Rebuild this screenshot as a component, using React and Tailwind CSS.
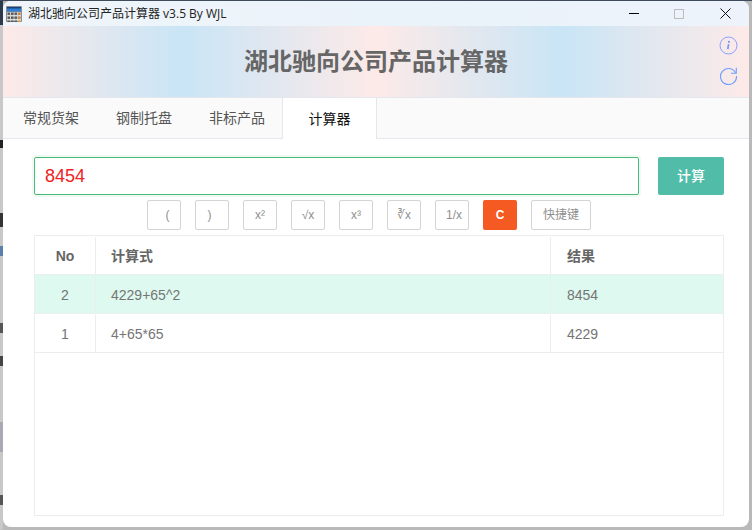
const CJK = '"Liberation Sans","Noto Sans CJK SC",sans-serif';

function CalcIcon() {
  return (
    <svg width="16" height="16" viewBox="0 0 16 16" className="shrink-0">
      <rect x="0" y="0" width="16" height="16" rx="1" fill="#8b8f92" />
      <rect x="1" y="1" width="14" height="4.5" fill="#2f7fd6" />
      <rect x="1" y="1" width="14" height="1.5" fill="#14427e" />
      <rect x="1" y="6" width="14" height="9" fill="#d9d9d6" />
      {[1.5, 5.5, 9.5].map((y0, r) =>
        [1.5, 5, 8.5, 12].map((x0, c) => (
          <rect key={`${r}-${c}`} x={x0} y={y0 + 5} width="2.6" height="2.4" fill={c === 3 && r === 2 ? "#e8962e" : c === 3 ? "#c77f3a" : "#55585c"} />
        ))
      )}
    </svg>
  );
}

function SmallButton({ children, wide, danger, extra = "" }) {
  return (
    <button
      className={`h-[30px] rounded-[2px] text-xs flex items-center justify-center ${wide ? "w-[60px]" : "w-[34px]"} ${danger ? "bg-[#f45a22] text-white font-bold" : "bg-white border border-[#d4d4d4] text-[#8f8f8f]"} ${extra}`}
    >
      {children}
    </button>
  );
}

function Row({ no, expr, result, highlight }) {
  return (
    <div className={`flex h-[39px] border-b border-[#ebeef0] text-sm text-[#757575] pt-[1px] ${highlight ? "bg-[#def9ef]" : "bg-white"}`}>
      <div className="w-[61px] shrink-0 border-r border-[#ebeef0] flex items-center justify-center">{no}</div>
      <div className="w-[455px] shrink-0 border-r border-[#ebeef0] flex items-center pl-[15px]">{expr}</div>
      <div className="flex-1 flex items-center pl-[16px]">{result}</div>
    </div>
  );
}

export default function App() {
  const tabs = ["常规货架", "钢制托盘", "非标产品"];
  return (
    <div
      className="relative w-[752px] h-[530px] overflow-hidden bg-[#b9b9b9] pl-[3px] pr-[3px] pt-[1px] pb-[3px]"
      style={{ fontFamily: CJK }}
    >
      <div className="absolute left-0 top-0 w-full h-[1px] bg-[#3f4b5c]" />
      <div className="absolute left-0 top-[1px] w-[3px] h-[24px] bg-[#2c3a4e]" />
      <div className="absolute left-0 top-[25px] w-[3px] h-[505px] bg-[#c8c8c8]" />
      <div className="absolute left-0 top-[140px] w-[3px] h-[8px] bg-[#222222]" />
      <div className="absolute left-0 top-[213px] w-[3px] h-[14px] bg-[#333333]" />
      <div className="absolute left-0 top-[246px] w-[3px] h-[10px] bg-[#5a7fae]" />
      <div className="absolute left-0 top-[323px] w-[3px] h-[10px] bg-[#555555]" />
      <div className="absolute left-0 top-[356px] w-[3px] h-[10px] bg-[#444444]" />
      <div className="absolute left-0 top-[422px] w-[3px] h-[30px] bg-[#a9a9b3]" />
      <div className="absolute left-0 top-[495px] w-[3px] h-[10px] bg-[#555555]" />
      <div className="relative flex flex-col w-[746px] h-[526px] bg-white rounded-lg overflow-hidden">
        <div className="flex h-[25px] items-center bg-[linear-gradient(90deg,#eff5fa,#eaf3fa_60%,#eef3fb)] shrink-0">
          <div className="ml-[3px]"><CalcIcon /></div>
          <span className="ml-[6px] text-xs text-[#222222]" style={{ fontFamily: '"Open Sans","Noto Sans CJK SC",sans-serif' }}>湖北驰向公司产品计算器 v3.5 By WJL</span>
          <div className="ml-auto flex items-center pr-[18px]">
            <div className="w-[10px] h-[1px] bg-black mr-[35px]" />
            <div className="w-[10px] h-[10px] border border-[#bdbdbd] mr-[36px]" />
            <svg width="11" height="11" viewBox="0 0 11 11"><path d="M0.5 0.5L10.5 10.5M10.5 0.5L0.5 10.5" stroke="#111" strokeWidth="1" /></svg>
          </div>
        </div>
        <div className="relative flex h-[72px] items-center justify-center shrink-0 border-b border-[#e4e7ed] bg-[linear-gradient(90deg,#fdeae8_0%,#c9e5f6_24%,#fdeae8_50%,#c9e5f6_75%,#fdeae8_100%)]">
          <h1 className="text-2xl font-bold text-[#666666]">湖北驰向公司产品计算器</h1>
          <svg className="absolute right-[11px] top-[10px]" width="19" height="19" viewBox="0 0 19 19" fill="none">
            <circle cx="9.5" cy="9.5" r="8.5" stroke="#8a9cff" strokeWidth="1" />
            <circle cx="9.9" cy="5.8" r="1.1" fill="#7f93f5" />
            <path d="M9.6 8.2L8.8 13.2" stroke="#7f93f5" strokeWidth="1.7" />
          </svg>
          <svg className="absolute right-[11px] top-[40px]" width="19" height="19" viewBox="0 0 19 19" fill="none">
            <path d="M16.6 6.8A8 8 0 1 0 17.5 10" stroke="#6f9cff" strokeWidth="1.1" />
            <path d="M17.3 1.8V7.2H12" stroke="#6f9cff" strokeWidth="1.1" />
          </svg>
        </div>
        <div className="flex h-[41px] shrink-0 bg-[#fafafa] border-b border-[#e4e7ed]">
          <div className="flex pl-[20px] gap-[37px] items-center w-[279px]">
            {tabs.map((t) => (
              <span key={t} className="text-sm leading-none text-[#555555]">{t}</span>
            ))}
          </div>
          <div className="w-[95px] h-[41px] bg-white border-l border-r border-[#e4e7ed] flex items-center justify-center text-sm text-[#111111]">计算器</div>
        </div>
        <div className="flex flex-col flex-1 pl-[31px] pr-[25px] pt-[18px]">
          <div className="flex gap-[19px]">
            <div className="flex-1 h-[38px] border border-[#48bb78] rounded-[2px] shadow-[0_0_0_2px_#f1f9f4] flex items-center pl-[10px] text-lg text-[#ee2222]">8454</div>
            <button className="w-[66px] h-[38px] rounded-[2px] bg-[#51bca8] text-white text-sm font-medium">计算</button>
          </div>
          <div className="flex gap-[14px] mt-[5px] pl-[113px]">
            <SmallButton extra="pl-[7px]">(</SmallButton>
            <SmallButton extra="pr-[5px]">)</SmallButton>
            <SmallButton>x²</SmallButton>
            <SmallButton>√x</SmallButton>
            <SmallButton>x³</SmallButton>
            <SmallButton>∛x</SmallButton>
            <SmallButton extra="pl-[4px]">1/x</SmallButton>
            <SmallButton danger>C</SmallButton>
            <SmallButton wide>快捷键</SmallButton>
          </div>
          <div className="mt-[5px] h-[281px] border border-[#ebeef0]">
            <div className="flex h-[39px] border-b border-[#ebeef0] text-sm font-bold text-[#666666] pt-[1px]">
              <div className="w-[61px] shrink-0 border-r border-[#ebeef0] flex items-center justify-center">No</div>
              <div className="w-[455px] shrink-0 border-r border-[#ebeef0] flex items-center pl-[15px]">计算式</div>
              <div className="flex-1 flex items-center pl-[16px]">结果</div>
            </div>
            <Row no="2" expr="4229+65^2" result="8454" highlight />
            <Row no="1" expr="4+65*65" result="4229" />
          </div>
        </div>
      </div>
    </div>
  );
}
